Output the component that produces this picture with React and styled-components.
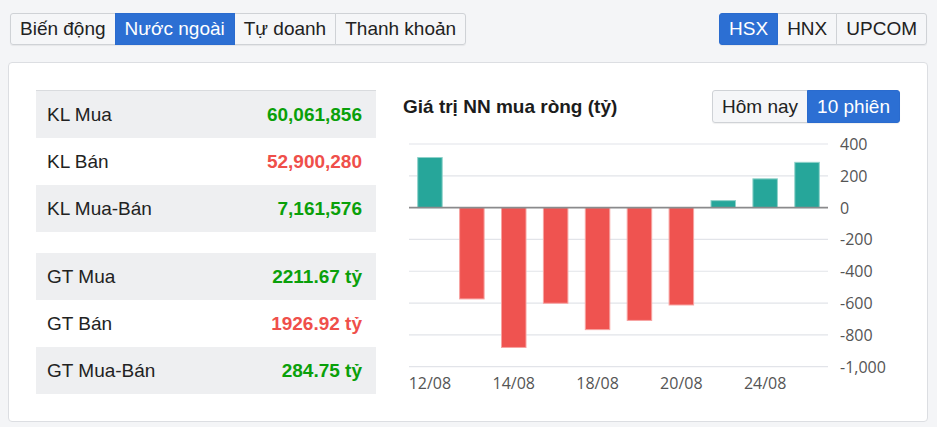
import React from "react";
import styled, { createGlobalStyle } from "styled-components";

const GlobalStyle = createGlobalStyle`
  body {
    margin: 0;
    background: #f4f5f7;
    font-family: "Liberation Sans", Arial, sans-serif;
    color: #222;
  }
`;

const Page = styled.div`
  padding: 13px 9px 0 8px;
`;

const Toolbar = styled.div`
  display: flex;
  justify-content: space-between;
  padding: 0 1px 0 2px;
`;

const ButtonGroup = styled.div`
  display: inline-flex;
  height: ${(p) => p.$height || 32}px;
  border-radius: 3px;
  box-shadow: 0 1px 1px rgba(0, 0, 0, 0.06);
`;

const Tab = styled.button`
  font-family: "Liberation Sans", Arial, sans-serif;
  font-size: 19px;
  padding: 0 ${(p) => p.$pad || 9}px;
  margin: 0 0 0 -1px;
  border: 1px solid ${(p) => (p.$active ? "#2a6bce" : "#cfd2d6")};
  background: ${(p) => (p.$active ? "#2c6fd3" : "#f5f6f8")};
  color: ${(p) => (p.$active ? "#fff" : "#222")};
  cursor: pointer;
  position: relative;
  z-index: ${(p) => (p.$active ? 1 : 0)};

  &:first-child {
    margin-left: 0;
    border-radius: 3px 0 0 3px;
  }
  &:last-child {
    border-radius: 0 3px 3px 0;
  }
`;

const Card = styled.div`
  margin-top: 17px;
  background: #fff;
  border: 1px solid #dcdee2;
  border-radius: 4px;
  padding: 27px;
  display: grid;
  grid-template-columns: 340px 1fr;
  column-gap: 27px;
`;

const StatColumn = styled.div`
  display: flex;
  flex-direction: column;
  gap: 21px;
`;

const StatGroup = styled.div`
  border-top: ${(p) => (p.$lined ? "1px solid #d9dbde" : "none")};
`;

const StatRow = styled.div`
  display: flex;
  justify-content: space-between;
  align-items: center;
  height: 47px;
  padding: 0 14px 0 11px;
  font-size: 19px;
  background: ${(p) => (p.$shade ? "#eeeff1" : "#fff")};
`;

const StatValue = styled.span`
  font-weight: bold;
  color: ${(p) => (p.$tone === "down" ? "#ef4f4a" : "#0aa00a")};
`;

const ChartColumn = styled.div`
  display: flex;
  flex-direction: column;
`;

const ChartHeader = styled.div`
  display: flex;
  justify-content: space-between;
  align-items: center;
  height: 33px;
`;

const ChartTitle = styled.div`
  font-size: 19px;
  font-weight: bold;
  color: #1c1c1c;
`;

const ChartSvg = styled.svg`
  display: block;
  font-family: "Open Sans", "Noto Sans", sans-serif;
  font-size: 16px;
`;

const stats = [
  [
    { label: "KL Mua", value: "60,061,856", tone: "up" },
    { label: "KL Bán", value: "52,900,280", tone: "down" },
    { label: "KL Mua-Bán", value: "7,161,576", tone: "up" },
  ],
  [
    { label: "GT Mua", value: "2211.67 tỷ", tone: "up" },
    { label: "GT Bán", value: "1926.92 tỷ", tone: "down" },
    { label: "GT Mua-Bán", value: "284.75 tỷ", tone: "up" },
  ],
];

const sessions = [
  { day: "12/08", net: 315 },
  { day: "13/08", net: -574 },
  { day: "14/08", net: -879 },
  { day: "17/08", net: -601 },
  { day: "18/08", net: -767 },
  { day: "19/08", net: -709 },
  { day: "20/08", net: -612 },
  { day: "21/08", net: 44 },
  { day: "24/08", net: 181 },
  { day: "25/08", net: 284.75 },
];

const ticks = [400, 200, 0, -200, -400, -600, -800, -1000];

function NetChart() {
  const width = 497;
  const height = 270;
  const left = 6;
  const right = 425;
  const top = 21;
  const scale = 222.7 / 1400;
  const y = (v) => top + (400 - v) * scale;
  const step = (right - left) / sessions.length;
  const barW = 24.5;

  return (
    <ChartSvg width={width} height={height}>
      {ticks.map((t) =>
        t === 0 ? null : (
          <line key={t} x1={left} x2={right} y1={y(t)} y2={y(t)} stroke="#e2e4e9" strokeWidth="1.2" />
        )
      )}
      {sessions.map((s, i) => {
        const cx = left + step * (i + 0.5);
        const up = s.net >= 0;
        const y0 = y(0);
        const y1 = y(s.net);
        return (
          <rect
            key={s.day}
            x={cx - barW / 2}
            y={Math.min(y0, y1)}
            width={barW}
            height={Math.abs(y1 - y0)}
            fill={up ? "#26a69a" : "#ef5350"}
            stroke={up ? "#8fd2ca" : "#f7a3a1"}
            strokeWidth="1"
          />
        );
      })}
      <line x1={left} x2={right} y1={y(0)} y2={y(0)} stroke="#8a8a8c" strokeWidth="1.6" />
      {ticks.map((t) => (
        <text key={t} x={437} y={y(t)} dominantBaseline="central" fill="#555">
          {t.toLocaleString("en-US")}
        </text>
      ))}
      {sessions.map((s, i) =>
        i % 2 === 0 ? (
          <text
            key={s.day}
            x={left + step * (i + 0.5)}
            y={260}
            textAnchor="middle"
            dominantBaseline="central"
            fill="#555"
          >
            {s.day}
          </text>
        ) : null
      )}
    </ChartSvg>
  );
}

export default function App() {
  return (
    <Page>
      <GlobalStyle />
      <Toolbar>
        <ButtonGroup>
          <Tab>Biến động</Tab>
          <Tab $active>Nước ngoài</Tab>
          <Tab>Tự doanh</Tab>
          <Tab>Thanh khoản</Tab>
        </ButtonGroup>
        <ButtonGroup>
          <Tab $active>HSX</Tab>
          <Tab>HNX</Tab>
          <Tab>UPCOM</Tab>
        </ButtonGroup>
      </Toolbar>
      <Card>
        <StatColumn>
          {stats.map((group, g) => (
            <StatGroup key={g} $lined={g === 0}>
              {group.map((row, i) => (
                <StatRow key={row.label} $shade={i !== 1}>
                  <span>{row.label}</span>
                  <StatValue $tone={row.tone}>{row.value}</StatValue>
                </StatRow>
              ))}
            </StatGroup>
          ))}
        </StatColumn>
        <ChartColumn>
          <ChartHeader>
            <ChartTitle>Giá trị NN mua ròng (tỷ)</ChartTitle>
            <ButtonGroup $height={33}>
              <Tab>Hôm nay</Tab>
              <Tab $active>10 phiên</Tab>
            </ButtonGroup>
          </ChartHeader>
          <NetChart />
        </ChartColumn>
      </Card>
    </Page>
  );
}
